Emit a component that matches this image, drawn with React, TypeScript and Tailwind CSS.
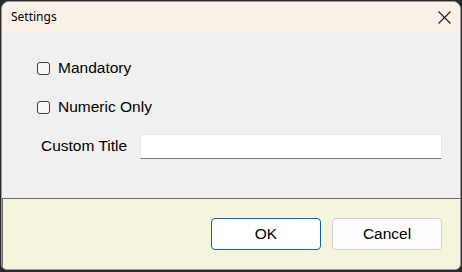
import React, { useState } from 'react';

const CheckRow: React.FC<{ label: string }> = ({ label }) => {
  const [checked, setChecked] = useState(false);
  return (
    <label className="flex items-center h-[26px] pl-[35px] cursor-default">
      <span
        onClick={() => setChecked(!checked)}
        className="w-[13px] h-[13px] border border-[#3c3c3c] rounded-[3px] bg-[#f7f7f7] flex items-center justify-center"
      >
        {checked && (
          <svg width="9" height="9" viewBox="0 0 9 9">
            <path d="M1 4.5 L3.5 7 L8 1.5" fill="none" stroke="#000" strokeWidth="1.2" />
          </svg>
        )}
      </span>
      <span className="ml-[8px] text-[15.5px] text-black leading-none">{label}</span>
    </label>
  );
};

export default function App() {
  const [title, setTitle] = useState('');

  return (
    <div
      className="w-[462px] h-[272px] bg-[#2a2a2a] pt-px pl-px pr-px pb-[2px]"
      style={{ fontFamily: '"Liberation Sans", Arial, sans-serif' }}
    >
      <div className="h-full flex flex-col border border-[#9a9a9a] rounded-t-[8px] rounded-b-[6px] overflow-hidden bg-[#f0f0f0]">
        <div className="h-[30px] shrink-0 bg-[#f9f1e8] flex items-center justify-between pl-[9px] pr-[8px]">
          <span className="text-[12px] text-black" style={{ fontFamily: '"Noto Sans", "Open Sans", sans-serif' }}>
            Settings
          </span>
          <svg width="13" height="13" viewBox="0 0 13 13" className="mr-[1px]">
            <path d="M0.5 0.5 L12.5 12.5 M12.5 0.5 L0.5 12.5" stroke="#1a1a1a" strokeWidth="1.1" fill="none" />
          </svg>
        </div>

        <div className="flex-1 flex flex-col gap-[13px] pt-[23px]">
          <CheckRow label="Mandatory" />
          <CheckRow label="Numeric Only" />
          <div className="flex items-center h-[26px] pl-[39px]">
            <span className="text-[15.5px] text-black leading-none w-[99px]">Custom Title</span>
            <input
              value={title}
              onChange={(e) => setTitle(e.target.value)}
              className="w-[302px] h-[25px] bg-white border border-[#e6e6e6] border-b-[#7a7a7a] outline-none px-1 text-[14px]"
            />
          </div>
        </div>

        <div className="h-[71px] shrink-0 bg-[#f5f4dc] border-t border-l border-[#6b6b6b] flex items-start justify-end gap-[11px] pt-[19px] pr-[18px]">
          <button className="w-[110px] h-[32px] bg-white border border-[#0067c0] rounded-[4px] text-[15.5px] text-black">
            OK
          </button>
          <button className="w-[110px] h-[32px] bg-[#fdfdfd] border border-[#d0d0d0] rounded-[4px] text-[15.5px] text-black">
            Cancel
          </button>
        </div>
      </div>
    </div>
  );
}
